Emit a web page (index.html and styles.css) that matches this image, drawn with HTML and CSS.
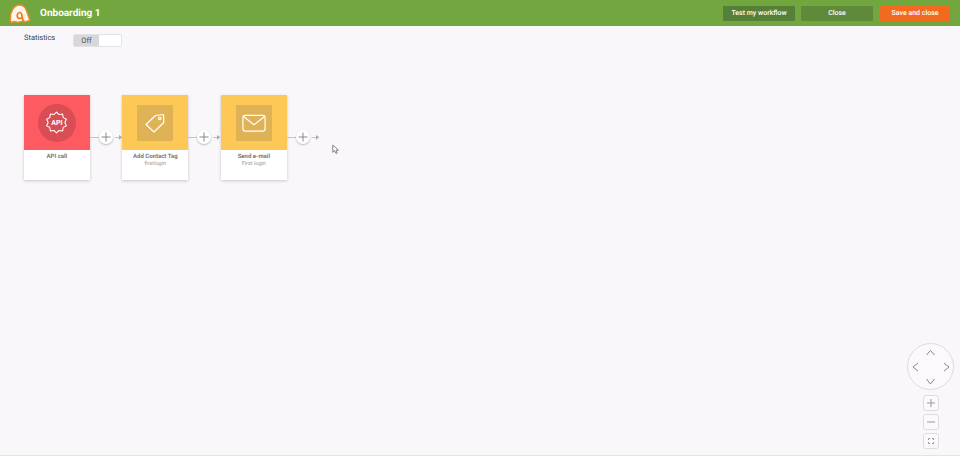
FILE: index.html
```html
<!DOCTYPE html>
<html lang="en">
  <head>
    <meta charset="UTF-8" />
    <title>Onboarding 1</title>
    <link rel="stylesheet" href="styles.css">
  </head>
  <body>
    <header class="topbar">
      <svg class="logo" viewBox="0 0 22 21" width="22" height="21">
        <path d="M1.500 18 C0.500 9 5 2 10.500 2 C15 2 17 5.500 18 9 L20.800 17.500 L15.500 19 L14.500 17.500 C12 19 8 19.500 5.500 18.500 L2.500 19.500 Z" fill="#fdf6ec" stroke="#f08a2c" stroke-width="1.400" stroke-linejoin="round"/>
        <path d="M13.800 17 L12.800 11.500 C12 8.500 8.800 9 8.200 12 C7.800 14.800 10 16 12.500 15" fill="none" stroke="#ee7a1c" stroke-width="1.700" stroke-linecap="round"/>
      </svg>
      <div class="title">Onboarding 1</div>
      <div class="actions">
        <button class="btn btn-dark">Test my workflow</button>
        <button class="btn btn-mid">Close</button>
        <button class="btn btn-orange">Save and close</button>
      </div>
    </header>

    <div class="stats">
      <span class="stats-label">Statistics</span>
      <div class="toggle">
        <span class="toggle-off">Off</span>
        <span class="toggle-on"></span>
      </div>
    </div>

    <main class="flow">
      <div class="card">
        <div class="card-top red">
          <div class="icon-circle">
            <svg viewBox="0 0 36 36" width="25" height="25" fill="none" stroke="#fff" stroke-width="1.500" stroke-linejoin="round">
              <path d="M18 3 L21.710 6.590 L26.820 5.860 L27.710 10.950 L32.270 13.360 L30 18 L32.270 22.640 L27.710 25.050 L26.820 30.140 L21.710 29.410 L18 33 L14.290 29.410 L9.180 30.140 L8.290 25.050 L3.730 22.640 L6 18 L3.730 13.360 L8.290 10.950 L9.180 5.860 L14.290 6.590 Z"/>
            </svg>
            <span class="api-text">API</span>
          </div>
        </div>
        <div class="card-body">
          <div class="card-name">API call</div>
        </div>
      </div>

      <div class="link">
        <span class="line"></span>
        <span class="plus">
          <svg viewBox="0 0 14 14" width="14" height="14" stroke="#8a8a8a" stroke-width="1"><path d="M7 2.500V11.500M2.500 7H11.500"/></svg>
        </span>
        <span class="arrow"></span>
      </div>

      <div class="card">
        <div class="card-top yellow">
          <div class="icon-square">
            <svg viewBox="0 0 24 24" width="24" height="24" fill="none" stroke="#fff" stroke-width="1.200" stroke-linejoin="round">
              <path d="M3 13.500 L12.500 4.500 L20.500 3.500 L20.800 11.500 L11 21 Z"/>
              <circle cx="16.800" cy="7.300" r="1.300"/>
            </svg>
          </div>
        </div>
        <div class="card-body">
          <div class="card-name">Add Contact Tag</div>
          <div class="card-sub">firstlogin</div>
        </div>
      </div>

      <div class="link">
        <span class="line"></span>
        <span class="plus">
          <svg viewBox="0 0 14 14" width="14" height="14" stroke="#8a8a8a" stroke-width="1"><path d="M7 2.500V11.500M2.500 7H11.500"/></svg>
        </span>
        <span class="arrow"></span>
      </div>

      <div class="card">
        <div class="card-top yellow">
          <div class="icon-square">
            <svg viewBox="0 0 24 24" width="28" height="28" fill="none" stroke="#fff" stroke-width="1" stroke-linejoin="round">
              <rect x="2.500" y="5.500" width="19" height="13.500" rx="2"/>
              <path d="M3 6.500 L12 13.500 L21 6.500"/>
            </svg>
          </div>
        </div>
        <div class="card-body">
          <div class="card-name">Send e-mail</div>
          <div class="card-sub">First login</div>
        </div>
      </div>

      <div class="link">
        <span class="line"></span>
        <span class="plus">
          <svg viewBox="0 0 14 14" width="14" height="14" stroke="#8a8a8a" stroke-width="1"><path d="M7 2.500V11.500M2.500 7H11.500"/></svg>
        </span>
        <span class="arrow"></span>
      </div>
    </main>

    <!-- mouse pointer caught in the screenshot -->
    <svg class="cursor" viewBox="0 0 10 13" width="8" height="11">
      <path d="M1 1 L1 10 L3.300 8 L5 11.500 L6.500 10.800 L5 7.500 L8 7.300 Z" fill="#fff" stroke="#555" stroke-width="0.900"/>
    </svg>

    <div class="nav">
      <div class="pad">
        <svg viewBox="0 0 45 45" width="45" height="45" fill="none" stroke="#888" stroke-width="1">
          <path d="M18.500 11 L22.500 6.500 L26.500 11"/>
          <path d="M18.500 35 L22.500 40 L26.500 35"/>
          <path d="M10 19 L5 23 L10 27"/>
          <path d="M36 19 L41 23 L36 27"/>
        </svg>
      </div>
      <button class="nav-btn">
        <svg viewBox="0 0 12 12" width="12" height="12" stroke="#999"><path d="M6 2V10M2 6H10"/></svg>
      </button>
      <button class="nav-btn">
        <svg viewBox="0 0 12 12" width="12" height="12" stroke="#999"><path d="M2 6H10"/></svg>
      </button>
      <button class="nav-btn">
        <svg viewBox="0 0 12 12" width="12" height="12" fill="none" stroke="#999"><path d="M3.500 5V3.500H5M7 3.500H8.500V5M8.500 7V8.500H7M5 8.500H3.500V7"/></svg>
      </button>
    </div>
  </body>
</html>
```

FILE: styles.css
```css
html,
body {
  height: 100%;
}

body {
  margin: 0;
  background-color: #f9f7f9;
  font-family: Roboto, "Liberation Sans", sans-serif;
  text-rendering: geometricPrecision;
  color: #555;
  overflow: hidden;
  position: relative;
  box-sizing: border-box;
  border-bottom: 1px solid #e4e4e4;
}

.topbar {
  height: 26px;
  background-color: #72a63e;
  display: flex;
  align-items: center;
  padding: 0 10px 0 9px;
}

.logo {
  margin-right: 9px;
}

.title {
  color: #fff;
  font-size: 10px;
  font-weight: 700;
}

.actions {
  margin-left: auto;
  display: flex;
  gap: 6px;
}

.btn {
  height: 15px;
  width: 72px;
  padding: 0;
  border: 0;
  border-radius: 1px;
  color: #fff;
  font-family: inherit;
  font-size: 7px;
  font-weight: 500;
  text-rendering: inherit;
}

.btn-dark {
  background-color: #567f37;
}

.btn-mid {
  background-color: #5f8a39;
}

.btn-orange {
  width: 70px;
  margin-left: 1px;
  background-color: #f26a1f;
}

.stats {
  display: flex;
  align-items: flex-start;
  padding: 8px 0 0 24px;
}

.stats-label {
  font-size: 7.500px;
  width: 49px;
  margin-top: -1px;
  color: #444;
}

.toggle {
  display: flex;
  height: 13px;
  width: 49px;
  border: 1px solid #e2e2e6;
  border-radius: 2px;
  box-sizing: border-box;
  background-color: #fff;
}

.toggle-off {
  width: 25px;
  background-color: #d8d8dc;
  font-size: 7.500px;
  line-height: 12px;
  text-align: center;
}

.flow {
  display: flex;
  align-items: flex-start;
  padding: 48px 0 0 24px;
}

.card {
  width: 65.700px;
  height: 85px;
  background-color: #fff;
  box-shadow: 0 1px 3px rgba(0, 0, 0, 0.2);
}

.card-top {
  height: 55px;
  display: flex;
  align-items: center;
  justify-content: center;
}

.red {
  background-color: #fd5a62;
}

.yellow {
  background-color: #fec857;
}

.icon-circle {
  width: 38px;
  height: 38px;
  border-radius: 50%;
  background-color: #d94d55;
  display: flex;
  align-items: center;
  justify-content: center;
  position: relative;
}

.api-text {
  position: absolute;
  color: #fff;
  font-size: 7px;
  font-weight: 700;
}

.icon-square {
  width: 36px;
  height: 36px;
  background-color: #dfb256;
  display: flex;
  align-items: center;
  justify-content: center;
}

.card-body {
  padding-top: 3px;
  text-align: center;
}

.card-name {
  font-size: 6px;
  font-weight: 700;
  line-height: 8px;
  color: #777;
}

.card-sub {
  font-size: 5.500px;
  line-height: 6px;
  color: #999;
}

.link {
  width: 32.800px;
  height: 85px;
  display: flex;
  align-items: flex-start;
  padding-top: 42px;
  box-sizing: border-box;
}

.line {
  width: 9px;
  height: 1px;
  background-color: #c4c4c4;
}

.plus {
  width: 14px;
  height: 14px;
  margin-top: -7px;
  border-radius: 50%;
  background-color: #fff;
  box-shadow: 0 1px 2px rgba(0, 0, 0, 0.25);
  display: flex;
  align-items: center;
  justify-content: center;
  flex-shrink: 0;
}

.arrow {
  width: 7px;
  height: 1px;
  margin-left: 2px;
  background-color: #c4c4c4;
  position: relative;
}

.arrow::after {
  content: "";
  position: absolute;
  right: 0;
  top: -2px;
  border-left: 3px solid #aaa;
  border-top: 2px solid transparent;
  border-bottom: 3px solid transparent;
}

.cursor {
  position: absolute;
  left: 332px;
  top: 144px;
}

.nav {
  position: absolute;
  right: 6px;
  top: 343px;
  width: 47px;
  display: flex;
  flex-direction: column;
  align-items: center;
}

.pad {
  width: 47px;
  height: 47px;
  box-sizing: border-box;
  border: 1px solid #ddd;
  border-radius: 50%;
  background-color: #fbf9fb;
  margin-bottom: 5px;
  display: flex;
}

.nav-btn {
  width: 16px;
  height: 16px;
  margin-bottom: 3px;
  padding: 0;
  border: 1px solid #ddd;
  border-radius: 3px;
  background-color: #fbf9fb;
  display: flex;
  align-items: center;
  justify-content: center;
}
```
